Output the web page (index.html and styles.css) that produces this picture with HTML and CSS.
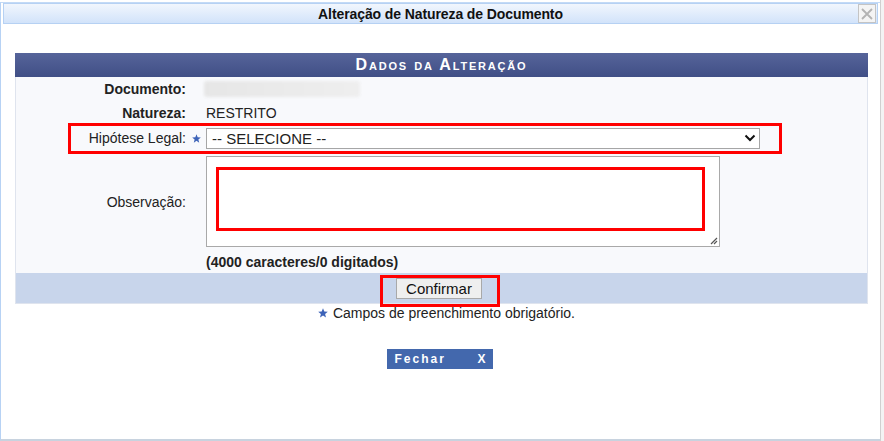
FILE: index.html
```html
<!DOCTYPE html>
<html lang="pt">
<head>
<meta charset="utf-8">
<title>Alteração de Natureza de Documento</title>
<link rel="stylesheet" href="styles.css">
</head>
<body>
<div class="page">
  <div class="dialog">
    <div class="titlebar">
      <span class="title">Alteração de Natureza de Documento</span>
      <span class="close-btn"><svg width="14" height="14" viewBox="0 0 14 14"><path d="M2 2 L12 12 M12 2 L2 12" stroke="#b3b3b3" stroke-width="1.8"/></svg></span>
    </div>
    <div class="content">
      <div class="formtable">
        <div class="caption">Dados da Alteração</div>
        <div class="fbody">
          <div class="row r1">
            <div class="lbl bold">Documento:</div><div class="star-cell"></div>
            <div class="val"><span class="blurred"></span></div>
          </div>
          <div class="row r2">
            <div class="lbl bold">Natureza:</div><div class="star-cell"></div>
            <div class="val">RESTRITO</div>
          </div>
          <div class="row r3">
            <div class="lbl">Hipótese Legal:</div>
            <div class="star-cell"><svg class="star" width="9" height="9" viewBox="0 0 10 10"><path d="M5 0.3 L6.3 3.6 L9.8 3.8 L7.1 6 L8 9.6 L5 7.6 L2 9.6 L2.9 6 L0.2 3.8 L3.7 3.6 Z" fill="#3d63b8"/></svg></div>
            <div class="val"><div class="select"><span>-- SELECIONE --</span><svg width="12" height="8" viewBox="0 0 12 8"><path d="M1.5 1.5 L6 6 L10.5 1.5" stroke="#111" stroke-width="2" fill="none"/></svg></div></div>
            <div class="redbox hl"></div>
          </div>
          <div class="row r4">
            <div class="lbl">Observação:</div><div class="star-cell"></div>
            <div class="val"><div class="textarea"><div class="redbox obs"></div><svg class="grip" width="8" height="8" viewBox="0 0 8 8"><path d="M7 1 L1 7 M7 4 L4 7" stroke="#555" stroke-width="1.2"/></svg></div></div>
          </div>
          <div class="row r5">
            <div class="lbl"></div><div class="star-cell"></div>
            <div class="val bold">(4000 caracteres/0 digitados)</div>
          </div>
        </div>
        <div class="ffoot">
          <div class="btnwrap"><button class="confirm">Confirmar</button><div class="redbox cf"></div></div>
        </div>
      </div>
      <div class="required"><svg class="star" width="10" height="10" viewBox="0 0 10 10"><path d="M5 0.3 L6.3 3.6 L9.8 3.8 L7.1 6 L8 9.6 L5 7.6 L2 9.6 L2.9 6 L0.2 3.8 L3.7 3.6 Z" fill="#3d63b8"/></svg> Campos de preenchimento obrigatório.</div>
      <div class="fechar-wrap"><div class="fechar"><span>Fechar</span><span>X</span></div></div>
    </div>
  </div>
  <div class="behind"></div>
</div>
</body>
</html>
```
FILE: styles.css
```css
html, body { margin: 0; padding: 0; }
body { width: 884px; height: 441px; overflow: hidden; background: #fff; font-family: "Liberation Sans", Arial, sans-serif; font-size: 14px; color: #222; }
.page { display: flex; height: 441px; }
.dialog { margin-top: 2px; width: 875px; height: 436px; border-left: 1px solid #b7d2f4; border-top: 1px solid #c3daf6; border-bottom: 2px solid #c8d3df; padding: 0 2px 0 2px; background: #fff; display: flex; flex-direction: column; }
.behind { flex: 1; border-left: 1px solid #d0d0d0; background: #f3f3f3; }
.titlebar { height: 19px; border: 1px solid #b6d1f3; background: linear-gradient(#f1f6fd, #d2e3fa); display: flex; align-items: center; justify-content: center; position: relative; }
.title { font-weight: bold; font-size: 14px; color: #111; letter-spacing: -0.1px; }
.close-btn { position: absolute; right: 1px; top: 0px; width: 16px; height: 17px; border: 1px solid #c4c4c4; background: #f4f4f4; display: flex; align-items: center; justify-content: center; }
.content { padding: 29px 10px 0 12px; }
.formtable { border: 1px solid #dfe4ee; border-top: none; }
.caption { height: 24px; background: linear-gradient(#56649a, #404f86); color: #fff; font-weight: bold; font-variant: small-caps; font-size: 16px; letter-spacing: 1.8px; display: flex; align-items: center; justify-content: center; margin: 0 -1px; }
.fbody { background: #f8f9fc; }
.row { display: grid; grid-template-columns: 170px 20px 1fr; align-items: center; position: relative; }
.r1 { height: 24px; }
.r2 { height: 23px; }
.r3 { height: 28px; }
.r4 { height: 99px; }
.r5 { height: 22px; }
.lbl { text-align: right; }
.bold { font-weight: bold; }
.star-cell { display: flex; align-items: center; justify-content: center; }
.blurred { display: block; width: 156px; height: 16px; background: linear-gradient(90deg, #e6e6e6, #ebebeb 60%, #eeeeee); border-radius: 3px; filter: blur(1.5px); margin-left: -2px; }
.select { height: 19px; border: 1px solid #a6a6a6; background: #fff; display: flex; align-items: center; justify-content: space-between; padding: 0 3px 0 5px; box-sizing: content-box; width: 544px; font-size: 15px; }
.textarea { width: 512px; height: 89px; border: 1px solid #a9a9a9; background: #fff; position: relative; }
.grip { position: absolute; right: 1px; bottom: 1px; }
.redbox { position: absolute; border: 3px solid #f00; box-sizing: border-box; pointer-events: none; }
.hl { left: 52px; top: -1px; width: 714px; height: 31px; }
.obs { left: 9px; top: 10px; width: 489px; height: 64px; }
.ffoot { height: 30px; background: #c8d5eb; display: flex; align-items: center; justify-content: center; }
.btnwrap { position: relative; margin-left: -5px; }
.confirm { font-family: "Liberation Sans", Arial, sans-serif; font-size: 15px; color: #111; width: 86px; height: 21px; border: 1px solid #a9a9a9; background: #efefef; padding: 0; display: block; }
.cf { left: -16px; top: -3px; width: 120px; height: 32px; }
.required { text-align: center; height: 18px; line-height: 18px; padding-left: 10px; }
.required .star { margin-right: 1px; }
.fechar-wrap { display: flex; justify-content: center; margin-top: 27px; }
.fechar { width: 106px; height: 20px; background: #4368ad; color: #fff; font-weight: bold; font-size: 12px; letter-spacing: 2px; display: flex; align-items: center; justify-content: space-between; padding: 0 5px 0 8px; box-sizing: border-box; margin-left: -4px; }
```
